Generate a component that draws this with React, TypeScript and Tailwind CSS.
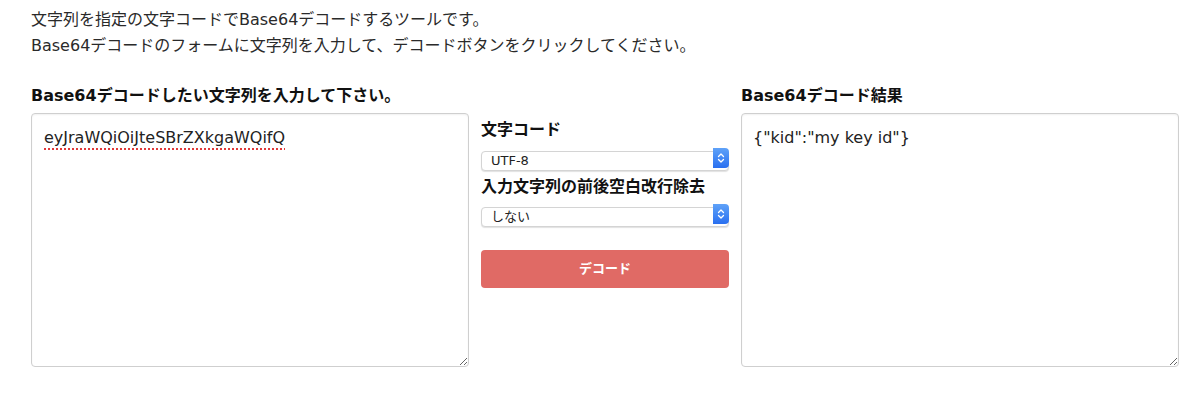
import React from "react";

const font = { fontFamily: '"DejaVu Sans", "Noto Sans CJK JP", sans-serif' };

function Chevrons() {
  return (
    <svg width="8" height="12" viewBox="0 0 8 12" fill="none">
      <path d="M1.5 4.5 L4 2 L6.5 4.5" stroke="white" strokeWidth="1.3" strokeLinecap="round" strokeLinejoin="round" />
      <path d="M1.5 7.5 L4 10 L6.5 7.5" stroke="white" strokeWidth="1.3" strokeLinecap="round" strokeLinejoin="round" />
    </svg>
  );
}

function MacSelect({ value, options }: { value: string; options: string[] }) {
  return (
    <div className="relative h-[20px] w-[248px]">
      <select
        defaultValue={value}
        className="h-[20px] w-full appearance-none rounded-[4px] border border-[#d4d4d4] bg-white pl-[9px] text-[13px] leading-[18px] text-[#222] shadow-[0_1px_1px_rgba(0,0,0,0.12)] outline-none"
        style={font}
      >
        {options.map((o) => (
          <option key={o}>{o}</option>
        ))}
      </select>
      <span className="pointer-events-none absolute right-0 top-0 flex h-[20px] w-[16px] items-center justify-center rounded-r-[4px] bg-gradient-to-b from-[#5fa2f8] to-[#2a6ff0]">
        <Chevrons />
      </span>
    </div>
  );
}

export default function App() {
  return (
    <div className="min-h-[395px] w-[1200px] bg-white pl-[31px] text-[#222]" style={font}>
      <div className="pt-[7px] text-[16px] leading-[26px] text-[#2a2a2a]">
        <p>文字列を指定の文字コードでBase64デコードするツールです。</p>
        <p>Base64デコードのフォームに文字列を入力して、デコードボタンをクリックしてください。</p>
      </div>
      <div className="mt-[24px] flex gap-[12px]">
        <div className="flex w-[438px] flex-col">
          <label className="h-[30px] text-[16px] font-bold leading-[26px] text-[#111]">
            Base64デコードしたい文字列を入力して下さい。
          </label>
          <textarea
            defaultValue="eyJraWQiOiJteSBrZXkgaWQifQ"
            spellCheck={false}
            className="h-[254px] w-[438px] rounded-[4px] border border-[#cfcfcf] px-[12px] py-[13px] text-[16px] leading-[22px] text-[#222] underline decoration-[#e03a3a] decoration-dotted decoration-[1.5px] underline-offset-[5px] shadow-[inset_0_1px_2px_rgba(0,0,0,0.06)] outline-none"
            style={font}
          />
        </div>
        <div className="flex w-[248px] flex-col pt-[35px]">
          <div className="text-[16px] font-bold leading-[24px] text-[#111]">文字コード</div>
          <div className="mt-[6px]">
            <MacSelect value="UTF-8" options={["UTF-8", "Shift_JIS", "EUC-JP"]} />
          </div>
          <div className="mt-[7px] text-[16px] font-bold leading-[24px] text-[#111]">入力文字列の前後空白改行除去</div>
          <div className="mt-[5px]">
            <MacSelect value="しない" options={["しない", "する"]} />
          </div>
          <button className="mt-[26px] h-[38px] w-[248px] rounded-[4px] bg-[#e06a65] text-[13px] font-bold text-white">
            デコード
          </button>
        </div>
        <div className="flex w-[438px] flex-col">
          <label className="h-[30px] text-[16px] font-bold leading-[26px] text-[#111]">Base64デコード結果</label>
          <textarea
            defaultValue={'{"kid":"my key id"}'}
            spellCheck={false}
            className="h-[254px] w-[438px] rounded-[4px] border border-[#cfcfcf] px-[11px] py-[13px] text-[16px] leading-[22px] text-[#222] shadow-[inset_0_1px_2px_rgba(0,0,0,0.06)] outline-none"
            style={font}
          />
        </div>
      </div>
    </div>
  );
}
